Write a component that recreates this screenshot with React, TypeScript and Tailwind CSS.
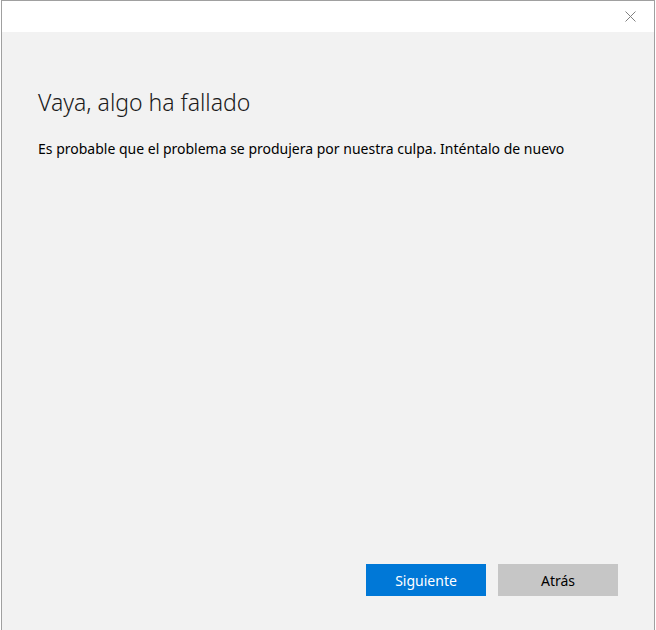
export default function App() {
  return (
    <div className="w-[656px] h-[630px] bg-white pl-[1px] pr-[1px]" style={{ fontFamily: '"Noto Sans", "Open Sans", sans-serif' }}>
      <div className="flex flex-col h-full border-t border-l border-r border-[#a0a0a0]">
        <div className="h-[31px] bg-white flex items-center justify-end pr-[18px] shrink-0">
          <svg width="11" height="11" viewBox="0 0 11 11" className="mt-[-1px]">
            <path d="M0.5 0.5 L10.5 10.5 M10.5 0.5 L0.5 10.5" stroke="#808080" strokeWidth="1" />
          </svg>
        </div>
        <div className="flex-1 bg-[#f2f2f2] flex flex-col px-[36px]">
          <h1 className="mt-[55px] text-[23px] font-light text-[#1a1a1a] leading-[30px]">Vaya, algo ha fallado</h1>
          <p className="mt-[22px] text-[14px] text-black leading-[20px]">
            Es probable que el problema se produjera por nuestra culpa. Inténtalo de nuevo
          </p>
          <div className="mt-auto mb-[34px] flex justify-end gap-[12px]">
            <button className="w-[120px] h-[32px] bg-[#0078d7] text-white text-[14px]">Siguiente</button>
            <button className="w-[120px] h-[32px] bg-[#c6c6c6] text-black text-[14px]">Atrás</button>
          </div>
        </div>
      </div>
    </div>
  );
}
